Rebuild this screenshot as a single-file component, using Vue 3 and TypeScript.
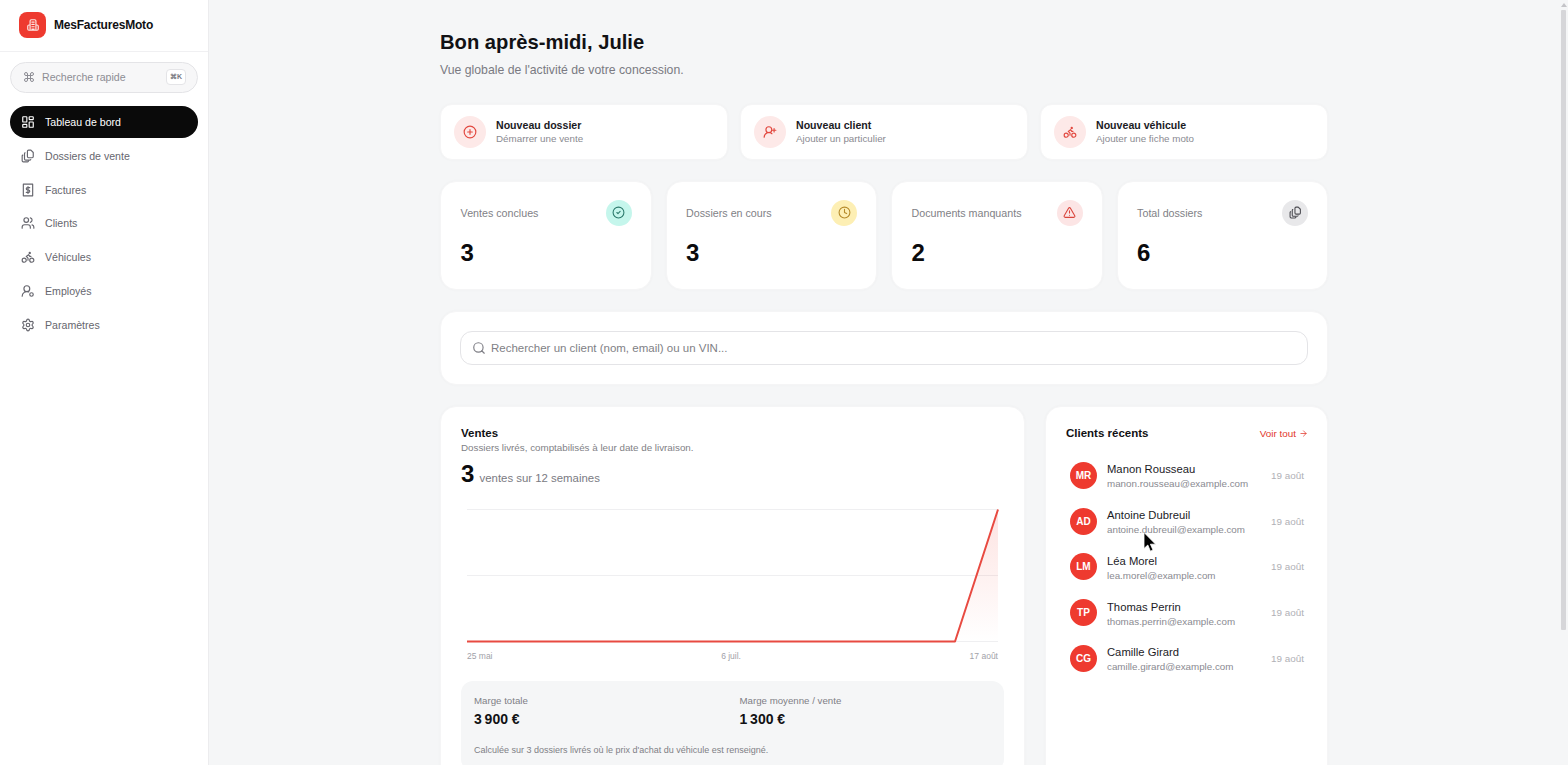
<script setup lang="ts">
const d: Record<string, string> = {
  logo: 'M7 21V5a2 2 0 0 1 2-2h6a2 2 0 0 1 2 2v16 M7 12H5a2 2 0 0 0-2 2v5a2 2 0 0 0 2 2h14a2 2 0 0 0 2-2v-5a2 2 0 0 0-2-2h-2 M10 7h4 M10 11h4 M10 15h4 M10 19h4',
  dashboard: 'M4 3h5a1 1 0 0 1 1 1v7a1 1 0 0 1-1 1H4a1 1 0 0 1-1-1V4a1 1 0 0 1 1-1Z M15 3h5a1 1 0 0 1 1 1v3a1 1 0 0 1-1 1h-5a1 1 0 0 1-1-1V4a1 1 0 0 1 1-1Z M15 12h5a1 1 0 0 1 1 1v7a1 1 0 0 1-1 1h-5a1 1 0 0 1-1-1v-7a1 1 0 0 1 1-1Z M4 16h5a1 1 0 0 1 1 1v3a1 1 0 0 1-1 1H4a1 1 0 0 1-1-1v-3a1 1 0 0 1 1-1Z',
  files: 'M13 2h4l4 4v7a2 2 0 0 1-2 2h-6a2 2 0 0 1-2-2V4a2 2 0 0 1 2-2Z M7 6.5a2 2 0 0 0-1 1.7V17a2 2 0 0 0 2 2h7a2 2 0 0 0 1.7-1 M3 10.5a2 2 0 0 0-1 1.7V20a2 2 0 0 0 2 2h7a2 2 0 0 0 1.7-1',
  invoice: 'M4 2h16v20H4Z M15 8h-4a1.5 1.5 0 0 0 0 4h2a1.5 1.5 0 0 1 0 4H9 M12 6v12',
  users: 'M16 21v-2a4 4 0 0 0-4-4H6a4 4 0 0 0-4 4v2 M16 3.128a4 4 0 0 1 0 7.744 M22 21v-2a4 4 0 0 0-3-3.87 M5 7a4 4 0 1 0 8 0a4 4 0 1 0-8 0Z',
  bike: 'M15 17.5a3.5 3.5 0 1 0 7 0a3.5 3.5 0 1 0-7 0Z M2 17.5a3.5 3.5 0 1 0 7 0a3.5 3.5 0 1 0-7 0Z M14 5a1 1 0 1 0 2 0a1 1 0 1 0-2 0Z M12 17.5V14l-3-3 4-3 2 3h2',
  employee: 'M2 21a8 8 0 0 1 11-7.4 M5 8a5 5 0 1 0 10 0a5 5 0 1 0-10 0Z M15 18a3 3 0 1 0 6 0a3 3 0 1 0-6 0Z',
  settings: 'M9.671 4.136a2.34 2.34 0 0 1 4.659 0 2.34 2.34 0 0 0 3.319 1.915 2.34 2.34 0 0 1 2.33 4.033 2.34 2.34 0 0 0 0 3.831 2.34 2.34 0 0 1-2.33 4.033 2.34 2.34 0 0 0-3.319 1.915 2.34 2.34 0 0 1-4.659 0 2.34 2.34 0 0 0-3.32-1.915 2.34 2.34 0 0 1-2.33-4.033 2.34 2.34 0 0 0 0-3.831A2.34 2.34 0 0 1 6.35 6.051a2.34 2.34 0 0 0 3.319-1.915 M9 12a3 3 0 1 0 6 0a3 3 0 1 0-6 0Z',
  plus: 'M2 12a10 10 0 1 0 20 0a10 10 0 1 0-20 0Z M8 12h8 M12 8v8',
  userPlus: 'M2 21a8 8 0 0 1 13.292-6 M5 8a5 5 0 1 0 10 0a5 5 0 1 0-10 0Z M19 6v6 M22 9h-6',
  check: 'M2 12a10 10 0 1 0 20 0a10 10 0 1 0-20 0Z M9 12l2 2 4-4',
  clock: 'M2 12a10 10 0 1 0 20 0a10 10 0 1 0-20 0Z M12 6v6l4 2',
  alert: 'M21.73 18l-8-14a2 2 0 0 0-3.48 0l-8 14A2 2 0 0 0 4 21h16a2 2 0 0 0 1.73-3 M12 9v4 M12 17h.01',
  search: 'M21 21l-4.34-4.34 M3 11a8 8 0 1 0 16 0a8 8 0 1 0-16 0Z',
  command: 'M15 6v12a3 3 0 1 0 3-3H6a3 3 0 1 0 3 3V6a3 3 0 1 0-3 3h12a3 3 0 1 0-3-3',
  arrow: 'M5 12h14 M12 5l7 7-7 7',
}

const nav = [
  { label: 'Tableau de bord', icon: 'dashboard', active: true },
  { label: 'Dossiers de vente', icon: 'files' },
  { label: 'Factures', icon: 'invoice' },
  { label: 'Clients', icon: 'users' },
  { label: 'Véhicules', icon: 'bike' },
  { label: 'Employés', icon: 'employee' },
  { label: 'Paramètres', icon: 'settings' },
]

const quick = [
  { title: 'Nouveau dossier', sub: 'Démarrer une vente', icon: 'plus' },
  { title: 'Nouveau client', sub: 'Ajouter un particulier', icon: 'userPlus' },
  { title: 'Nouveau véhicule', sub: 'Ajouter une fiche moto', icon: 'bike' },
]

const stats = [
  { label: 'Ventes conclues', value: 3, icon: 'check', tone: 'teal' },
  { label: 'Dossiers en cours', value: 3, icon: 'clock', tone: 'amber' },
  { label: 'Documents manquants', value: 2, icon: 'alert', tone: 'red' },
  { label: 'Total dossiers', value: 6, icon: 'files', tone: 'gray' },
]

const clients = [
  { initials: 'MR', name: 'Manon Rousseau', email: 'manon.rousseau@example.com' },
  { initials: 'AD', name: 'Antoine Dubreuil', email: 'antoine.dubreuil@example.com' },
  { initials: 'LM', name: 'Léa Morel', email: 'lea.morel@example.com' },
  { initials: 'TP', name: 'Thomas Perrin', email: 'thomas.perrin@example.com' },
  { initials: 'CG', name: 'Camille Girard', email: 'camille.girard@example.com' },
]
</script>

<template>
  <div class="layout">
    <aside class="sidebar">
      <div class="brand">
        <span class="brand-mark">
          <svg class="ic" width="14" height="14" viewBox="0 0 24 24"><path :d="d.logo" /></svg>
        </span>
        <span class="brand-name">MesFacturesMoto</span>
      </div>
      <div class="quick-search">
        <svg class="ic" width="12" height="12" viewBox="0 0 24 24"><path :d="d.command" /></svg>
        <span class="qs-text">Recherche rapide</span>
        <kbd>⌘K</kbd>
      </div>
      <nav class="nav">
        <a v-for="item in nav" :key="item.label" class="nav-item" :class="{ active: item.active }">
          <svg class="ic" width="14" height="14" viewBox="0 0 24 24"><path :d="d[item.icon]" /></svg>
          {{ item.label }}
        </a>
      </nav>
    </aside>

    <main class="main">
      <div class="content">
        <h1>Bon après-midi, Julie</h1>
        <p class="lead">Vue globale de l'activité de votre concession.</p>

        <section class="quick">
          <div v-for="q in quick" :key="q.title" class="quick-card">
            <span class="quick-icon">
              <svg class="ic" width="14" height="14" viewBox="0 0 24 24"><path :d="d[q.icon]" /></svg>
            </span>
            <div>
              <div class="quick-title">{{ q.title }}</div>
              <div class="quick-sub">{{ q.sub }}</div>
            </div>
          </div>
        </section>

        <section class="stats">
          <div v-for="s in stats" :key="s.label" class="stat-card">
            <div class="stat-top">
              <span class="stat-label">{{ s.label }}</span>
              <span class="stat-icon" :class="s.tone">
                <svg class="ic" width="13" height="13" viewBox="0 0 24 24"><path :d="d[s.icon]" /></svg>
              </span>
            </div>
            <div class="stat-value">{{ s.value }}</div>
          </div>
        </section>

        <section class="card search-card">
          <div class="search-box">
            <svg class="ic" width="14" height="14" viewBox="0 0 24 24"><path :d="d.search" /></svg>
            <span>Rechercher un client (nom, email) ou un VIN...</span>
          </div>
        </section>

        <section class="columns">
          <div class="card sales">
            <h2>Ventes</h2>
            <p class="sales-sub">Dossiers livrés, comptabilisés à leur date de livraison.</p>
            <div class="sales-count"><strong>3</strong> ventes sur 12 semaines</div>
            <svg class="chart" width="543" height="136" viewBox="0 0 543 136">
              <defs>
                <linearGradient id="area" x1="0" y1="0" x2="0" y2="1">
                  <stop offset="0" stop-color="#ef3a2d" stop-opacity="0.14" />
                  <stop offset="1" stop-color="#ef3a2d" stop-opacity="0" />
                </linearGradient>
              </defs>
              <path class="grid" d="M6 1.5H537 M6 67.5H537 M6 133.5H537" />
              <path d="M494 133.5L537 1.5V133.5Z" fill="url(#area)" />
              <path class="line" d="M6 133.5H494L537 1.5" />
            </svg>
            <div class="axis"><span>25 mai</span><span>6 juil.</span><span>17 août</span></div>
            <div class="margin">
              <div class="margin-row">
                <div>
                  <div class="margin-label">Marge totale</div>
                  <div class="margin-value">3&#8239;900&nbsp;€</div>
                </div>
                <div>
                  <div class="margin-label">Marge moyenne / vente</div>
                  <div class="margin-value">1&#8239;300&nbsp;€</div>
                </div>
              </div>
              <p class="margin-note">Calculée sur 3 dossiers livrés où le prix d'achat du véhicule est renseigné.</p>
            </div>
          </div>

          <div class="card recent">
            <div class="recent-head">
              <h2>Clients récents</h2>
              <a class="see-all">Voir tout
                <svg class="ic" width="9" height="9" viewBox="0 0 24 24"><path :d="d.arrow" /></svg>
              </a>
            </div>
            <div v-for="c in clients" :key="c.email" class="client">
              <span class="avatar">{{ c.initials }}</span>
              <div class="client-info">
                <div class="client-name">{{ c.name }}</div>
                <div class="client-mail">{{ c.email }}</div>
              </div>
              <span class="client-date">19 août</span>
            </div>
          </div>
        </section>
      </div>
    </main>

    <div class="scrollbar"><span class="scroll-arrow"></span><span class="scroll-thumb"></span></div>

    <svg class="cursor" width="14" height="20" viewBox="0 0 14 20">
      <path d="M1 0.5V16.5L4.8 13L7.4 19.2L10 18L7.4 12.2H12.6Z" fill="#000" stroke="#fff" stroke-width="0.8" />
    </svg>
  </div>
</template>

<style scoped>
* {
  box-sizing: border-box;
}
.layout {
  display: flex;
  align-items: flex-start;
  position: relative;
  font-family: "Liberation Sans", Arial, sans-serif;
  color: #111114;
}
.ic {
  fill: none;
  stroke: currentColor;
  stroke-width: 2;
  stroke-linecap: round;
  stroke-linejoin: round;
  flex: none;
}

.sidebar {
  position: sticky;
  top: 0;
  width: 209px;
  height: 100vh;
  flex: none;
  background: #fff;
  border-right: 1px solid #ececee;
}
.brand {
  height: 52px;
  display: flex;
  align-items: center;
  gap: 8px;
  padding: 0 0 1px 19px;
  border-bottom: 1px solid #f0f0f2;
}
.brand-mark {
  width: 27px;
  height: 26px;
  border-radius: 8px;
  background: #ee3a2f;
  color: #fde8e6;
  display: flex;
  align-items: center;
  justify-content: center;
}
.brand-name {
  font-size: 12px;
  font-weight: 700;
  letter-spacing: -0.2px;
}
.quick-search {
  margin: 10px 10px 0;
  height: 30.5px;
  border: 1px solid #e4e4e7;
  border-radius: 16px;
  background: #f7f7f8;
  display: flex;
  align-items: center;
  padding: 0 11px 0 12px;
  color: #8d8d94;
  font-size: 10.6px;
  gap: 7px;
}
.qs-text {
  flex: 1;
}
kbd {
  width: 20px;
  height: 16px;
  border: 1px solid #e4e4e7;
  border-radius: 4px;
  background: #fff;
  font-family: inherit;
  font-size: 7px;
  font-weight: 700;
  color: #77777e;
  display: flex;
  align-items: center;
  justify-content: center;
}
.nav {
  margin: 13.5px 10px 0;
  display: flex;
  flex-direction: column;
  gap: 1.8px;
}
.nav-item {
  height: 32px;
  display: flex;
  align-items: center;
  gap: 10px;
  padding-left: 11px;
  border-radius: 16px;
  font-size: 10.6px;
  color: #66666e;
}
.nav-item.active {
  background: #0a0a0a;
  color: #fff;
}

.main {
  flex: 1;
  min-width: 0;
  background: #f5f6f7;
  padding: 30px 0 130px;
}
.content {
  width: 888px;
  margin: 0 auto;
}
h1 {
  margin: 0;
  font-size: 20.2px;
  line-height: 24px;
  font-weight: 700;
}
.lead {
  margin: 8px 0 0;
  font-size: 12.25px;
  line-height: 16px;
  color: #7a7a82;
}
.quick {
  margin-top: 25.5px;
  display: grid;
  grid-template-columns: repeat(3, 1fr);
  gap: 12px;
}
.quick-card {
  height: 56px;
  background: #fff;
  border: 1px solid #f5f5f6;
  border-radius: 12px;
  box-shadow: 0 0 3px rgba(0, 0, 0, 0.03);
  display: flex;
  align-items: center;
  gap: 10px;
  padding-left: 13px;
}
.quick-icon {
  width: 32px;
  height: 32px;
  border-radius: 50%;
  background: #fde9e8;
  color: #e2483f;
  display: flex;
  align-items: center;
  justify-content: center;
}
.quick-title {
  font-size: 10.6px;
  line-height: 14px;
  font-weight: 700;
  color: #1b1b1f;
}
.quick-sub {
  font-size: 9.8px;
  line-height: 14px;
  color: #8a8a91;
}
.stats {
  margin-top: 21px;
  display: grid;
  grid-template-columns: repeat(4, 1fr);
  gap: 14px;
}
.stat-card {
  height: 109.5px;
  background: #fff;
  border: 1px solid #f5f5f6;
  border-radius: 16px;
  box-shadow: 0 0 3px rgba(0, 0, 0, 0.03);
  padding: 18px 19px 0 19.6px;
}
.stat-top {
  display: flex;
  justify-content: space-between;
  align-items: center;
}
.stat-label {
  font-size: 10.7px;
  color: #7f7f86;
}
.stat-icon {
  width: 26px;
  height: 26px;
  border-radius: 50%;
  display: flex;
  align-items: center;
  justify-content: center;
}
.teal { background: #c5f6ec; color: #2c7a6c; }
.amber { background: #fdefb4; color: #b58a2a; }
.red { background: #fce5e5; color: #d9453c; }
.gray { background: #e8e8ea; color: #4a4a50; }
.stat-value {
  margin-top: 13px;
  font-size: 24px;
  line-height: 28px;
  font-weight: 700;
  color: #0b0b0d;
}
.card {
  background: #fff;
  border: 1px solid #f5f5f6;
  border-radius: 16px;
  box-shadow: 0 0 3px rgba(0, 0, 0, 0.03);
}
.search-card {
  margin-top: 21px;
  padding: 19px;
  height: 74px;
}
.search-box {
  height: 34px;
  border: 1px solid #e4e4e7;
  border-radius: 12px;
  display: flex;
  align-items: center;
  gap: 5px;
  padding-left: 11px;
  font-size: 11.5px;
  color: #7f7f86;
}
.columns {
  margin-top: 21px;
  display: grid;
  grid-template-columns: 1fr 283px;
  gap: 20px;
  align-items: stretch;
}
.sales {
  padding: 18px 20px 24px;
}
h2 {
  margin: 0;
  font-size: 11.5px;
  line-height: 16px;
  font-weight: 700;
}
.sales-sub {
  margin: 0;
  font-size: 9.8px;
  line-height: 14px;
  color: #7f7f86;
}
.sales-count {
  margin-top: 6px;
  font-size: 11.4px;
  line-height: 26px;
  color: #7a7a82;
}
.sales-count strong {
  font-size: 24px;
  color: #0b0b0d;
  margin-right: 2px;
}
.chart {
  display: block;
  margin-top: 17px;
}
.grid {
  stroke: #efeff1;
  stroke-width: 1;
  fill: none;
}
.line {
  stroke: #e84a41;
  stroke-width: 2;
  fill: none;
  stroke-linejoin: round;
}
.axis {
  display: flex;
  justify-content: space-between;
  padding: 6px 6px 0;
  font-size: 8.5px;
  line-height: 12px;
  color: #a1a1a8;
}
.margin {
  margin-top: 19px;
  background: #f5f6f7;
  border-radius: 12px;
  padding: 13px 13px 14px;
}
.margin-row {
  display: grid;
  grid-template-columns: 1fr 1fr;
  gap: 14px;
}
.margin-label {
  font-size: 9.7px;
  line-height: 13px;
  color: #7f7f86;
}
.margin-value {
  margin-top: 3px;
  font-size: 14px;
  line-height: 18px;
  font-weight: 700;
  color: #111114;
}
.margin-note {
  margin: 16px 0 0;
  font-size: 9px;
  line-height: 13px;
  color: #7f7f86;
}
.recent {
  padding: 18px 19px 20px 20px;
}
.recent-head {
  display: flex;
  justify-content: space-between;
  align-items: center;
  margin-bottom: 11.5px;
}
.see-all {
  font-size: 9.9px;
  color: #e2382c;
  display: flex;
  align-items: center;
  gap: 3px;
}
.client {
  height: 45.75px;
  display: flex;
  align-items: center;
  padding: 0 4px;
  gap: 10px;
}
.avatar {
  width: 27px;
  height: 27px;
  border-radius: 50%;
  background: #ee3a2f;
  color: #fff;
  font-size: 10px;
  font-weight: 700;
  display: flex;
  align-items: center;
  justify-content: center;
  flex: none;
}
.client-info {
  flex: 1;
  min-width: 0;
  padding-top: 3px;
}
.client-name {
  font-size: 11.25px;
  line-height: 15px;
  color: #1b1b1f;
}
.client-mail {
  font-size: 9.8px;
  line-height: 14px;
  color: #8a8a91;
}
.client-date {
  font-size: 9.9px;
  color: #b0b0b6;
}
.scrollbar {
  position: sticky;
  top: 0;
  width: 9px;
  height: 100vh;
  flex: none;
  background: #f5f6f7;
  display: flex;
  flex-direction: column;
  align-items: center;
}
.scroll-arrow {
  margin-top: 3px;
  width: 0;
  height: 0;
  border-left: 3px solid transparent;
  border-right: 3px solid transparent;
  border-bottom: 4px solid #c4c4c8;
}
.scroll-thumb {
  margin-top: 3px;
  width: 5px;
  height: 620px;
  background: #d6d6d9;
  border-radius: 1px;
}
.cursor {
  position: absolute;
  left: 1143px;
  top: 532px;
}
</style>

<style>
html {
  background: #f5f6f7;
}
</style>
